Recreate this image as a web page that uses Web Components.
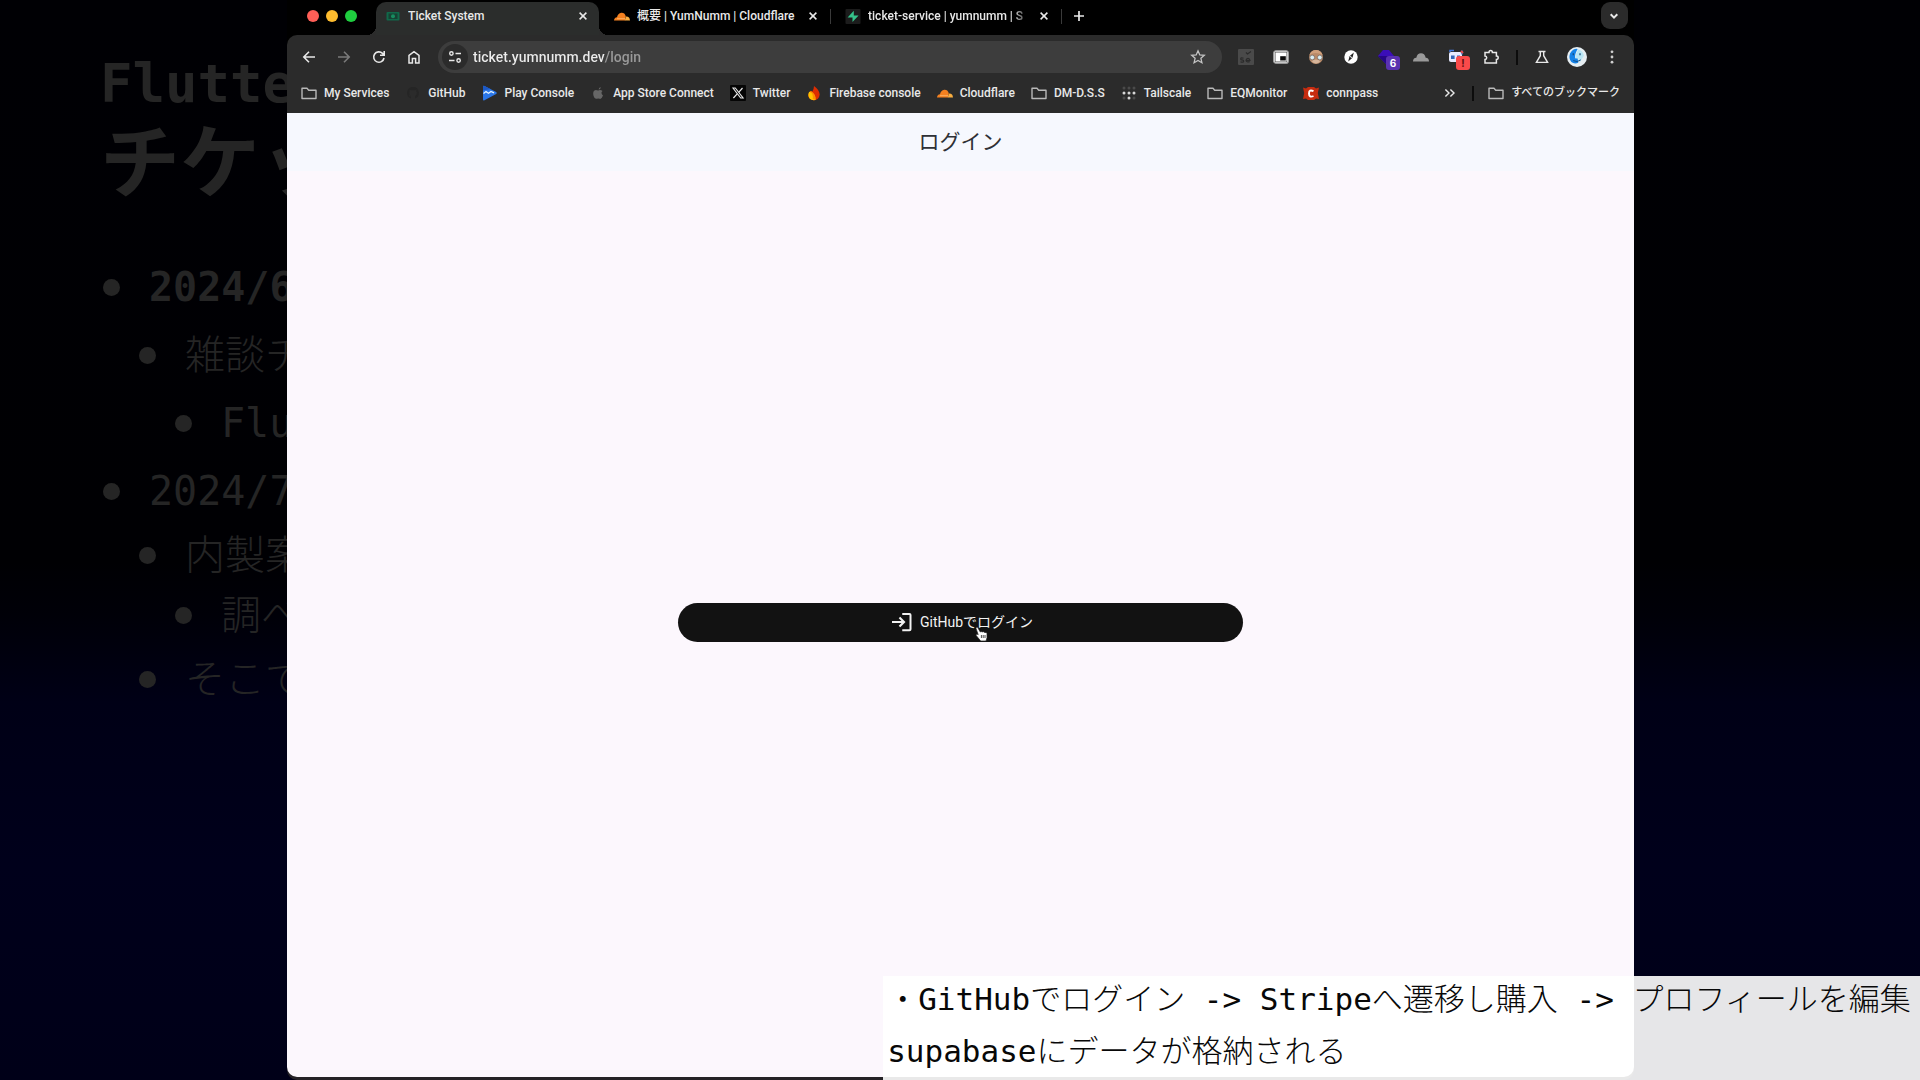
<!DOCTYPE html>
<html lang="ja">
<head>
    <meta charset="UTF-8">
    <meta name="viewport" content="width=device-width, initial-scale=1.0">
    <title>Ticket System</title>
    <style>
        body {
            margin: 0;
            background: #000;
            font-family: Roboto, "Noto Sans CJK JP", sans-serif;
        }

        demo-stage {
            --chrome: #2b2b2b;
            --chrome-text: #e8e8e8;
            --slide-text: #252525;
            --slide-font: "DejaVu Sans Mono", "Noto Sans CJK JP", monospace;
            --slide-font-light: "DejaVu Sans Mono", "Noto Sans CJK JP Light", "Noto Sans CJK JP", monospace;
        }
    </style>
</head>
<body>
    <template id="stage-tmpl">
        <style>
            :host {
                display: grid;
                grid-template: 100vh / 100%;
                overflow: hidden;
                background: linear-gradient(#000004 0%, #000003 52%, #000008 57%, #000016 65%, #00001b 80%, #000018 100%);
            }

            ::slotted(*) {
                grid-area: 1 / 1;
                min-width: 0;
            }

            ::slotted(browser-window) {
                justify-self: center;
                width: 70.15%;
                margin: 0 0 3px 1px;
            }

            ::slotted(live-caption) {
                place-self: end;
                width: 54%;
            }
        </style>
        <slot></slot>
    </template>

    <template id="slide-tmpl">
        <style>
            :host {
                display: block;
                box-sizing: border-box;
                padding: 50px 0 0 100px;
                color: var(--slide-text);
                font: 40px/68px var(--slide-font-light);
                white-space: nowrap;
            }

            h1 {
                margin: 0 0 43px;
                font-family: var(--slide-font);
                font-size: 54px;
                line-height: 68px;
            }

            h1 ::slotted([slot="subtitle"]) {
                display: block;
                font-size: 80px;
                line-height: 92px;
            }

            div { padding-left: 3px; }
        </style>
        <h1><slot name="title"></slot><slot name="subtitle"></slot></h1>
        <div role="list"><slot></slot></div>
    </template>

    <template id="item-tmpl">
        <style>
            :host {
                display: flex;
                align-items: center;
                gap: 29px;
                height: 68px;
                line-height: 60px;
            }

            :host([level="2"]) { padding-left: 36px; }
            :host([level="3"]) { padding-left: 72px; }
            :host([compact]) { height: 60px; }
            :host([strong]) { font-weight: bold; }
            :host([last]) { margin-top: 4px; }

            i {
                width: 17px;
                height: 17px;
                border-radius: 50%;
                background: currentColor;
            }
        </style>
        <i></i><span><slot></slot></span>
    </template>

    <template id="window-tmpl">
        <style>
            :host {
                display: flex;
                flex-direction: column;
                overflow: hidden;
                border-radius: 0 0 10px 10px;
                background: #000;
                box-shadow: 0 3px 0 #252226;
                color: var(--chrome-text);
                font-size: 12px;
                font-weight: 500;
            }

            .strip {
                display: flex;
                align-items: flex-end;
                height: 35px;
                padding-right: 6px;
            }

            .lights {
                display: flex;
                gap: 7px;
                padding: 0 19px 13px 20px;
            }

            .lights i {
                width: 12px;
                height: 12px;
                border-radius: 50%;
                background: #ff5f57;
            }

            .lights i:nth-child(2) { background: #febc2e; }
            .lights i:nth-child(3) { background: #1fce3f; }

            button {
                display: grid;
                place-items: center;
                padding: 0;
                border: 0;
                background: none;
                color: inherit;
            }

            .plus {
                width: 34px;
                height: 38px;
            }

            .search {
                width: 27px;
                height: 27px;
                margin: 0 0 6px auto;
                border-radius: 9px;
                background: var(--chrome);
            }

            .bars {
                background: var(--chrome);
                border-radius: 10px 10px 0 0;
            }

            .tools {
                display: flex;
                align-items: center;
                height: 44px;
                padding: 0 4px;
            }

            .tools button {
                width: 35px;
                height: 32px;
            }

            .omnibox {
                display: flex;
                align-items: center;
                flex: 1;
                height: 32px;
                margin: 0 7px;
                padding: 0 6px 0 4px;
                border-radius: 16px;
                background: #3d3d3d;
            }

            .omnibox .site {
                width: 26px;
                height: 26px;
                border-radius: 50%;
                background: var(--chrome);
            }

            .omnibox input {
                flex: 1;
                min-width: 0;
                margin-left: 5px;
                padding: 0;
                border: 0;
                outline: 0;
                /* host part bright, path part dimmed */
                background: linear-gradient(90deg, #ececec 132px, #9a9a9a 132px);
                -webkit-background-clip: text;
                background-clip: text;
                -webkit-text-fill-color: transparent;
                color: #ececec;
                font: 500 14px/20px Roboto, sans-serif;
            }

            hr {
                width: 2px;
                height: 15px;
                margin: 0 7px;
                border: 0;
                background: #0c0c0c;
            }

            .marks {
                display: flex;
                align-items: center;
                gap: 16px;
                height: 28px;
                padding: 0 14px 6px;
            }

            .more {
                display: flex;
                align-items: center;
                gap: 7px;
                margin-left: auto;
                font-size: 11px;
            }

            .page {
                display: flex;
                flex: 1;
            }

            .page ::slotted(*) { flex: 1; }
        </style>
        <div class="strip">
            <div class="lights"><i></i><i></i><i></i></div>
            <slot name="tab"></slot>
            <button class="plus" aria-label="New tab"><ui-icon name="plus"></ui-icon></button>
            <button class="search" aria-label="Search tabs"><ui-icon name="chevron"></ui-icon></button>
        </div>
        <div class="bars">
            <div class="tools">
                <button aria-label="Back"><ui-icon name="back"></ui-icon></button>
                <button aria-label="Forward"><ui-icon name="forward"></ui-icon></button>
                <button aria-label="Reload"><ui-icon name="reload"></ui-icon></button>
                <button aria-label="Home"><ui-icon name="home"></ui-icon></button>
                <div class="omnibox">
                    <button class="site" aria-label="Site information"><ui-icon name="tune"></ui-icon></button>
                    <input type="text" aria-label="Address" value="ticket.yumnumm.dev/login">
                    <button aria-label="Bookmark"><ui-icon name="star"></ui-icon></button>
                </div>
                <slot name="extension"></slot>
                <hr>
                <button aria-label="Labs"><ui-icon name="flask"></ui-icon></button>
                <button aria-label="Profile"><ui-icon name="avatar" size="20"></ui-icon></button>
                <button aria-label="Menu"><ui-icon name="kebab"></ui-icon></button>
            </div>
            <div class="marks">
                <slot name="bookmark"></slot>
                <div class="more">
                    <button aria-label="More bookmarks"><ui-icon name="more"></ui-icon></button>
                    <hr>
                    <slot name="all"></slot>
                </div>
            </div>
        </div>
        <div class="page"><slot></slot></div>
    </template>

    <template id="tab-tmpl">
        <style>
            :host {
                display: flex;
                align-items: center;
                box-sizing: border-box;
                width: 231px;
                height: 38px;
                padding: 0 10px 0 14px;
                gap: 7px;
            }

            :host([active]) {
                position: relative;
                width: 223px;
                height: 33px;
                margin-right: 1px;
                padding: 0 8px 5px 9px;
                border-radius: 10px 10px 0 0;
                background: #2b2d2c;
            }

            /* flared feet that join the tab to the toolbar */
            :host([active])::before, :host([active])::after {
                content: "";
                position: absolute;
                bottom: 0;
                width: 9px;
                height: 9px;
            }

            :host([active])::before {
                right: 100%;
                background: radial-gradient(circle at 0 0, transparent 9px, var(--chrome) 9px);
            }

            :host([active])::after {
                left: 100%;
                background: radial-gradient(circle at 100% 0, transparent 9px, var(--chrome) 9px);
            }

            :host([divided]) {
                background: linear-gradient(#3a3a3a, #3a3a3a) right center / 1px 15px no-repeat;
            }

            span {
                flex: 1;
                overflow: hidden;
                white-space: nowrap;
                line-height: 18px;
            }

            :host([fade]) span {
                -webkit-mask: linear-gradient(90deg, #000 145px, transparent 162px);
                mask: linear-gradient(90deg, #000 145px, transparent 162px);
            }

            button {
                display: grid;
                place-items: center;
                width: 16px;
                height: 16px;
                padding: 0;
                border: 0;
                background: none;
                color: inherit;
            }
        </style>
        <ui-icon></ui-icon>
        <span><slot></slot></span>
        <button aria-label="Close tab"><ui-icon name="close"></ui-icon></button>
    </template>

    <template id="ext-tmpl">
        <style>
            :host {
                position: relative;
                display: grid;
                place-items: center;
                width: 35px;
                height: 32px;
            }

            b {
                position: absolute;
                left: 17px;
                top: 15px;
                width: 14px;
                height: 14px;
                border-radius: 3px;
                background: var(--badge, #5a32b0);
                color: var(--badge-text, #fff);
                font: bold 10px/14px Inter, sans-serif;
                text-align: center;
            }

            b:empty { display: none; }
        </style>
        <ui-icon></ui-icon><b></b>
    </template>

    <template id="bookmark-tmpl">
        <style>
            :host { display: block; }

            a {
                display: flex;
                align-items: center;
                gap: 7px;
                color: inherit;
                line-height: 18px;
                text-decoration: none;
                white-space: nowrap;
            }
        </style>
        <a href="#"><ui-icon></ui-icon><slot></slot></a>
    </template>

    <template id="login-tmpl">
        <style>
            :host {
                display: flex;
                flex-direction: column;
                background: #fcf7fd;
                color: #2e3036;
            }

            header {
                display: grid;
                place-items: center;
                height: 58px;
                background: #f6f8fe;
            }

            h2 {
                margin: 0;
                font: 21px/30px Roboto, "Noto Sans CJK JP", sans-serif;
            }

            main {
                display: grid;
                flex: 1;
                place-items: center;
                padding-bottom: 4px;
            }

            button {
                position: relative;
                display: flex;
                align-items: center;
                justify-content: center;
                gap: 8px;
                width: 42%;
                height: 39px;
                padding: 0 0 0 4px;
                border: 0;
                border-radius: 20px;
                background: #121212;
                color: #f2f2f2;
                font: 14px/20px Roboto, "Noto Sans CJK JP", sans-serif;
            }

            .pointer {
                position: absolute;
                left: calc(50% + 14px);
                top: 23px;
            }
        </style>
        <header><h2><slot name="title"></slot></h2></header>
        <main>
            <button>
                <ui-icon name="login" size="20"></ui-icon>
                <span><slot></slot></span>
                <ui-icon class="pointer" name="hand"></ui-icon>
            </button>
        </main>
    </template>

    <template id="caption-tmpl">
        <style>
            :host {
                display: flow-root;
                box-sizing: border-box;
                padding: 0 0 3px 4px;
                background: rgba(255, 255, 255, .9);
                color: #080808;
                font: 31px/52px var(--slide-font-light);
                white-space: nowrap;
            }

            ::slotted(p) { margin: 0; }
            ::slotted(p:first-child) { margin-top: -3px; }
        </style>
        <slot></slot>
    </template>

    <demo-stage>
        <slide-page>
            <span slot="title">Flutte</span>
            <span slot="subtitle">チケッ</span>
            <slide-item strong>2024/6</slide-item>
            <slide-item level="2">雑談チ</slide-item>
            <slide-item level="3">Flu</slide-item>
            <slide-item>2024/7</slide-item>
            <slide-item level="2" compact>内製案</slide-item>
            <slide-item level="3" compact>調べ</slide-item>
            <slide-item level="2" compact last>そこで</slide-item>
        </slide-page>

        <browser-window>
            <browser-tab slot="tab" icon="ticket" active>Ticket System</browser-tab>
            <browser-tab slot="tab" icon="cloudflare" divided>概要 | YumNumm | Cloudflare</browser-tab>
            <browser-tab slot="tab" icon="supabase" divided fade>ticket-service | yumnumm | S</browser-tab>

            <browser-extension slot="extension" icon="selenium"></browser-extension>
            <browser-extension slot="extension" icon="pip"></browser-extension>
            <browser-extension slot="extension" icon="face"></browser-extension>
            <browser-extension slot="extension" icon="compass"></browser-extension>
            <browser-extension slot="extension" icon="gem" badge="6"></browser-extension>
            <browser-extension slot="extension" icon="cloud"></browser-extension>
            <browser-extension slot="extension" icon="robot" badge="!" style="--badge: #fa4a4a; --badge-text: #5a1010"></browser-extension>
            <browser-extension slot="extension" icon="puzzle"></browser-extension>

            <bookmark-link slot="bookmark" icon="folder">My Services</bookmark-link>
            <bookmark-link slot="bookmark" icon="github">GitHub</bookmark-link>
            <bookmark-link slot="bookmark" icon="play">Play Console</bookmark-link>
            <bookmark-link slot="bookmark" icon="apple">App Store Connect</bookmark-link>
            <bookmark-link slot="bookmark" icon="x">Twitter</bookmark-link>
            <bookmark-link slot="bookmark" icon="firebase">Firebase console</bookmark-link>
            <bookmark-link slot="bookmark" icon="cloudflare">Cloudflare</bookmark-link>
            <bookmark-link slot="bookmark" icon="folder">DM-D.S.S</bookmark-link>
            <bookmark-link slot="bookmark" icon="tailscale">Tailscale</bookmark-link>
            <bookmark-link slot="bookmark" icon="folder">EQMonitor</bookmark-link>
            <bookmark-link slot="bookmark" icon="connpass">connpass</bookmark-link>
            <bookmark-link slot="all" icon="folder">すべてのブックマーク</bookmark-link>

            <login-view>
                <span slot="title">ログイン</span>
                GitHubでログイン
            </login-view>
        </browser-window>

        <live-caption>
            <p>・GitHubでログイン -&gt; Stripeへ遷移し購入 -&gt; プロフィールを編集</p>
            <p>supabaseにデータが格納される</p>
        </live-caption>
    </demo-stage>

    <script>
        const line = (d, w = 1.6) => `<path d="${d}" fill="none" stroke="currentColor" stroke-width="${w}"/>`;

        // every icon is drawn on a 16 x 16 grid
        const icons = {
            plus: line('M8 3v10M3 8h10', 1.7),
            close: line('M4.6 4.6l6.8 6.8M11.4 4.6l-6.8 6.8', 1.5),
            chevron: line('M4.7 6.3L8 9.6l3.3-3.3', 2),
            back: line('M14 8H3M8 2.8L2.8 8 8 13.2'),
            forward: `<g opacity=".42">${line('M2 8h11M8 2.8L13.2 8 8 13.2')}</g>`,
            reload: line('M13 9a5.2 5.2 0 1 1-1.5-4.7L13 5.8M13.2 2v4.2H9'),
            home: line('M3 14V6.4L8 2.6l5 3.8V14H9.6V9.4H6.4V14z', 1.5),
            tune: line('M8.5 4.5H14M2 11.5h5.5', 1.5) + '<g fill="none" stroke="currentColor" stroke-width="1.4"><circle cx="4.4" cy="4.5" r="1.7"/><circle cx="11.6" cy="11.5" r="1.7"/></g>',
            star: '<path d="M8 1.8l1.8 4.1 4.5.4-3.4 3 1 4.4L8 11.4l-3.9 2.3 1-4.4-3.4-3 4.5-.4z" fill="none" stroke="#c4c4c4" stroke-width="1.3"/>',
            flask: line('M4.5 2.5h7M6.3 2.5v4.2L2.4 13.4h11.2L9.7 6.7V2.5', 1.4),
            kebab: '<g fill="#cfcfcf"><circle cx="8" cy="2.8" r="1.4"/><circle cx="8" cy="8" r="1.4"/><circle cx="8" cy="13.2" r="1.4"/></g>',
            more: line('M3.4 4.5L7 8l-3.6 3.5M8.4 4.5L12 8l-3.6 3.5', 1.4),
            avatar: '<circle cx="8" cy="8" r="8" fill="#e6eef2"/><path d="M2.500 5q2.500-4 6-3.500-2.500 4-2 7.500h2l.5 3.500q-3 1.500-5.500-.5-2.500-3-1-7z" fill="#1683e8"/><path d="M9 2q4 1 4.500 5l-3.500 5.500-1-3.500H6.800Q7 5 9 2z" fill="#b9e6f5"/><path d="M5 10.800q3 2 6-.5" stroke="#10508c" fill="none" stroke-width=".8"/><path d="M5 5v1.500M10.400 5v1.500" stroke="#174b7b"/>',
            ticket: '<rect x="1.500" y="4" width="13" height="8.500" rx="1" fill="#11694a"/><rect x="3.500" y="5.500" width="9" height="5.500" fill="#174133"/><circle cx="8" cy="8.300" r="2" fill="#188c60"/>',
            cloudflare: '<path d="M0 12.500q.2-3 3-3.300.8-3.700 4.300-4.400 3.400-.2 4.500 3.400l-.7 4.300z" fill="#f38020"/><path d="M10.800 12.500l1.200-4q3.700-.3 4 4z" fill="#faae40"/><path d="M3 10.700h8" stroke="#ffd08f" stroke-width=".6"/>',
            supabase: '<rect x=".5" y="1" width="15" height="15" rx="1" fill="#1c1c1c"/><path d="M8.800 2.800v4.700h4.800L7.500 14V9.600H2.600z" fill="#35c28a"/>',
            folder: '<path d="M1 3.300h5l1.700 1.900H15v8.300H1z" fill="none" stroke="#b9b9b9" stroke-width="1.400" stroke-linejoin="round"/>',
            github: '<path d="M8 2a6 6 0 0 0-2 11.600V11.500Q4 11.800 3.600 10q1 .2 1.500.8l.9.1Q4 10.300 4.200 7.500l.5-1.200-.1-1.700 1.600.6h3.600l1.600-.6-.1 1.700.5 1.200Q12 10.300 10 10.900v2.700A6 6 0 0 0 8 2z" fill="#252525"/>',
            play: '<path d="M1 1.800Q1 .3 2.500 1l11.700 6q1.400 1 0 2L2.500 15.200Q1 15.800 1 14.400z" fill="#2a76e8"/><path d="M1 5.500V1.800Q1 .3 2.500 1l6 3z" fill="#1c58c4"/><path d="M1.500 8.500L4 6.600l2.500 1.600L9 6.400l3 1.400" fill="none" stroke="#e2f3ff" stroke-width="1.300"/>',
            apple: '<path d="M10.700 2q.2 2-2 2.700Q8.600 2.600 10.700 2zM8.100 5.400q2.500-1.200 4.400.6-2.300 2 .5 4.400-1.500 4-3.300 3.400-1.600-.6-2.900 0Q4.500 14.300 3.300 10q-.7-4.400 2.500-4.900 1 0 2.300.3z" fill="#666"/>',
            x: '<rect width="16" height="16" rx="1" fill="#050505"/><path d="M3 3h2.300l7.800 10h-2.400z" fill="none" stroke="#e8e8e8" stroke-width="1.100"/><path d="M12.500 3L8.700 7.300M7.200 8.900L3.400 13" stroke="#e8e8e8" stroke-width="1.200"/>',
            firebase: '<path d="M8 1q5.500 4 5.700 8.500Q13 15 8 15.300 2.500 15 2.200 10 2.700 7 5 5.500l1 1.400Q8 4.800 8 1z" fill="#dd2c00"/><path d="M3.200 6.800Q9.600 7.500 9.500 15q-6.800 1-7.200-5 .1-2 .9-3.200z" fill="#ffc400"/><path d="M5 6q5 3 4.500 9l-2.800-1Q7.500 9 4 6.600z" fill="#ff9100"/>',
            tailscale: [3, 8, 13].map((y, r) => [3, 8, 13].map((x, c) => `<circle cx="${x}" cy="${y}" r="1.500" fill="${r == 1 || (r == 2 && c == 1) ? '#d6d6d6' : '#4a4a4a'}"/>`).join('')).join(''),
            connpass: '<path d="M0 2.500l3 1 2-1.500h6l2 1.500 3-1-1.200 5.500L16 14l-3-.6L11 15H5l-2-1.600-3 .6 1.200-6z" fill="#c62c10"/><path d="M10.500 6.200Q6 4 6 8.500t4.500 2.500" fill="none" stroke="#fff" stroke-width="1.900"/>',
            selenium: '<rect width="16" height="16" rx="1" fill="#4a4a4a"/><path d="M5.500 9.300q-2.800-1-2.800.6 0 .9 1.300 1 1.700.2 1.700 1.300 0 1.500-3.200.6M8 11.300h4q-.3-2-2-2t-2 2q.2 2.200 3.700 1.400M8 3.500l1.500 1.500L13 2.500" fill="none" stroke="#2b2b2b" stroke-width="1.200"/>',
            pip: '<rect x=".8" y="1.800" width="14.400" height="12.400" rx="2" fill="#fff" stroke="#a8a8a8" stroke-width="1.200"/><rect x="2.200" y="3.200" width="11.600" height="9.600" fill="none" stroke="#555" stroke-width=".6"/><path d="M7.200 7.200h5.600v4.300H7.200z" fill="#0c0c0c"/>',
            face: '<circle cx="8" cy="8" r="7" fill="#b98a68"/><path d="M1.500 6q6-4 13 0Q13 1 8 1T1.500 6z" fill="#d0a07c"/><path d="M3.500 12q4.500-3 9 0Q8 17 3.500 12z" fill="#d6b59b"/><g fill="#d9eef3" stroke="#7c6a60" stroke-width=".8"><circle cx="4.200" cy="8.500" r="2.400"/><circle cx="11.800" cy="8.500" r="2.400"/></g>',
            compass: '<circle cx="8" cy="8" r="6.700" fill="#fff"/><path d="M10.800 3.400L9.500 8.800 5.200 12.600 6.500 7.200z" fill="#222"/><path d="M6.500 7.200l3 1.600" stroke="#fff"/>',
            gem: '<path d="M5 1h6l5 6-8 8-8-8z" fill="#3b0eb8"/><path d="M0 7h16l-8 8z" fill="#270686"/>',
            cloud: '<path d="M0 12.500q0-3.500 3.300-3.800Q4.300 4.300 8 4.300t4.700 4.400q3.300.3 3.300 3.800z" fill="#9a9a9a"/>',
            robot: '<rect x="1" y="3" width="13" height="10" rx="2" fill="#e8ebff"/><path d="M2 3V1.500h4M14 1.500v4" stroke="#4279df" stroke-width="1.500" fill="none"/><path d="M3 6.500h3.600v3.500H3zM9 6.500h3V10H9z" fill="#3567b7"/><path d="M13 2l2 2" stroke="#e84848" stroke-width="2"/>',
            puzzle: line('M2 3.500h4q0-2 1.700-2t1.700 2h4V7q1.800 0 1.800 1.700t-1.800 1.700V14H2v-3.500q1.700-.2 1.700-1.800T2 7z', 1.500),
            login: line('M0 8h9.500M6 4.400L9.600 8 6 11.600', 1.700) + line('M8.200 1.500h5.800q.8 0 .8.8v11.400q0 .8-.8.8H8.200', 1.600),
            hand: '<path d="M1 2.500Q1 .8 2.600 1.300L5.300 6 6 5.500l1.500.4 1-.2 1.200.8 1.300 0 1 1v4.200l-1 3.300H5.700L1.200 9.500q-.7-1.700 1.300-1.200l.7.4z" fill="#fff" stroke="#222" stroke-width=".7"/><path d="M6.400 9v3M8.200 9v3M10 9v3" stroke="#222" stroke-width=".8"/>'
        };

        customElements.define('ui-icon', class extends HTMLElement {
            connectedCallback() {
                const size = this.getAttribute('size') || 16;
                this.attachShadow({ mode: 'open' }).innerHTML = `
                    <style>
                        :host { display: block; flex: none; width: ${size}px; height: ${size}px; }
                        svg { display: block; }
                    </style>
                    <svg width="${size}" height="${size}" viewBox="0 0 16 16" aria-hidden="true">${icons[this.getAttribute('name')] || ''}</svg>`;
            }
        });

        function define(name, id, setup) {
            customElements.define(name, class extends HTMLElement {
                connectedCallback() {
                    const content = document.getElementById(id).content.cloneNode(true);
                    if (setup) setup(this, content);
                    this.attachShadow({ mode: 'open' }).append(content);
                }
            });
        }

        function setIcon(host, content) {
            content.querySelector('ui-icon').setAttribute('name', host.getAttribute('icon'));
        }

        define('demo-stage', 'stage-tmpl');
        define('slide-page', 'slide-tmpl');
        define('slide-item', 'item-tmpl', host => host.setAttribute('role', 'listitem'));
        define('browser-window', 'window-tmpl');
        define('browser-tab', 'tab-tmpl', setIcon);
        define('browser-extension', 'ext-tmpl', (host, content) => {
            setIcon(host, content);
            content.querySelector('b').textContent = host.getAttribute('badge') || '';
        });
        define('bookmark-link', 'bookmark-tmpl', setIcon);
        define('login-view', 'login-tmpl');
        define('live-caption', 'caption-tmpl');
    </script>
</body>
</html>
